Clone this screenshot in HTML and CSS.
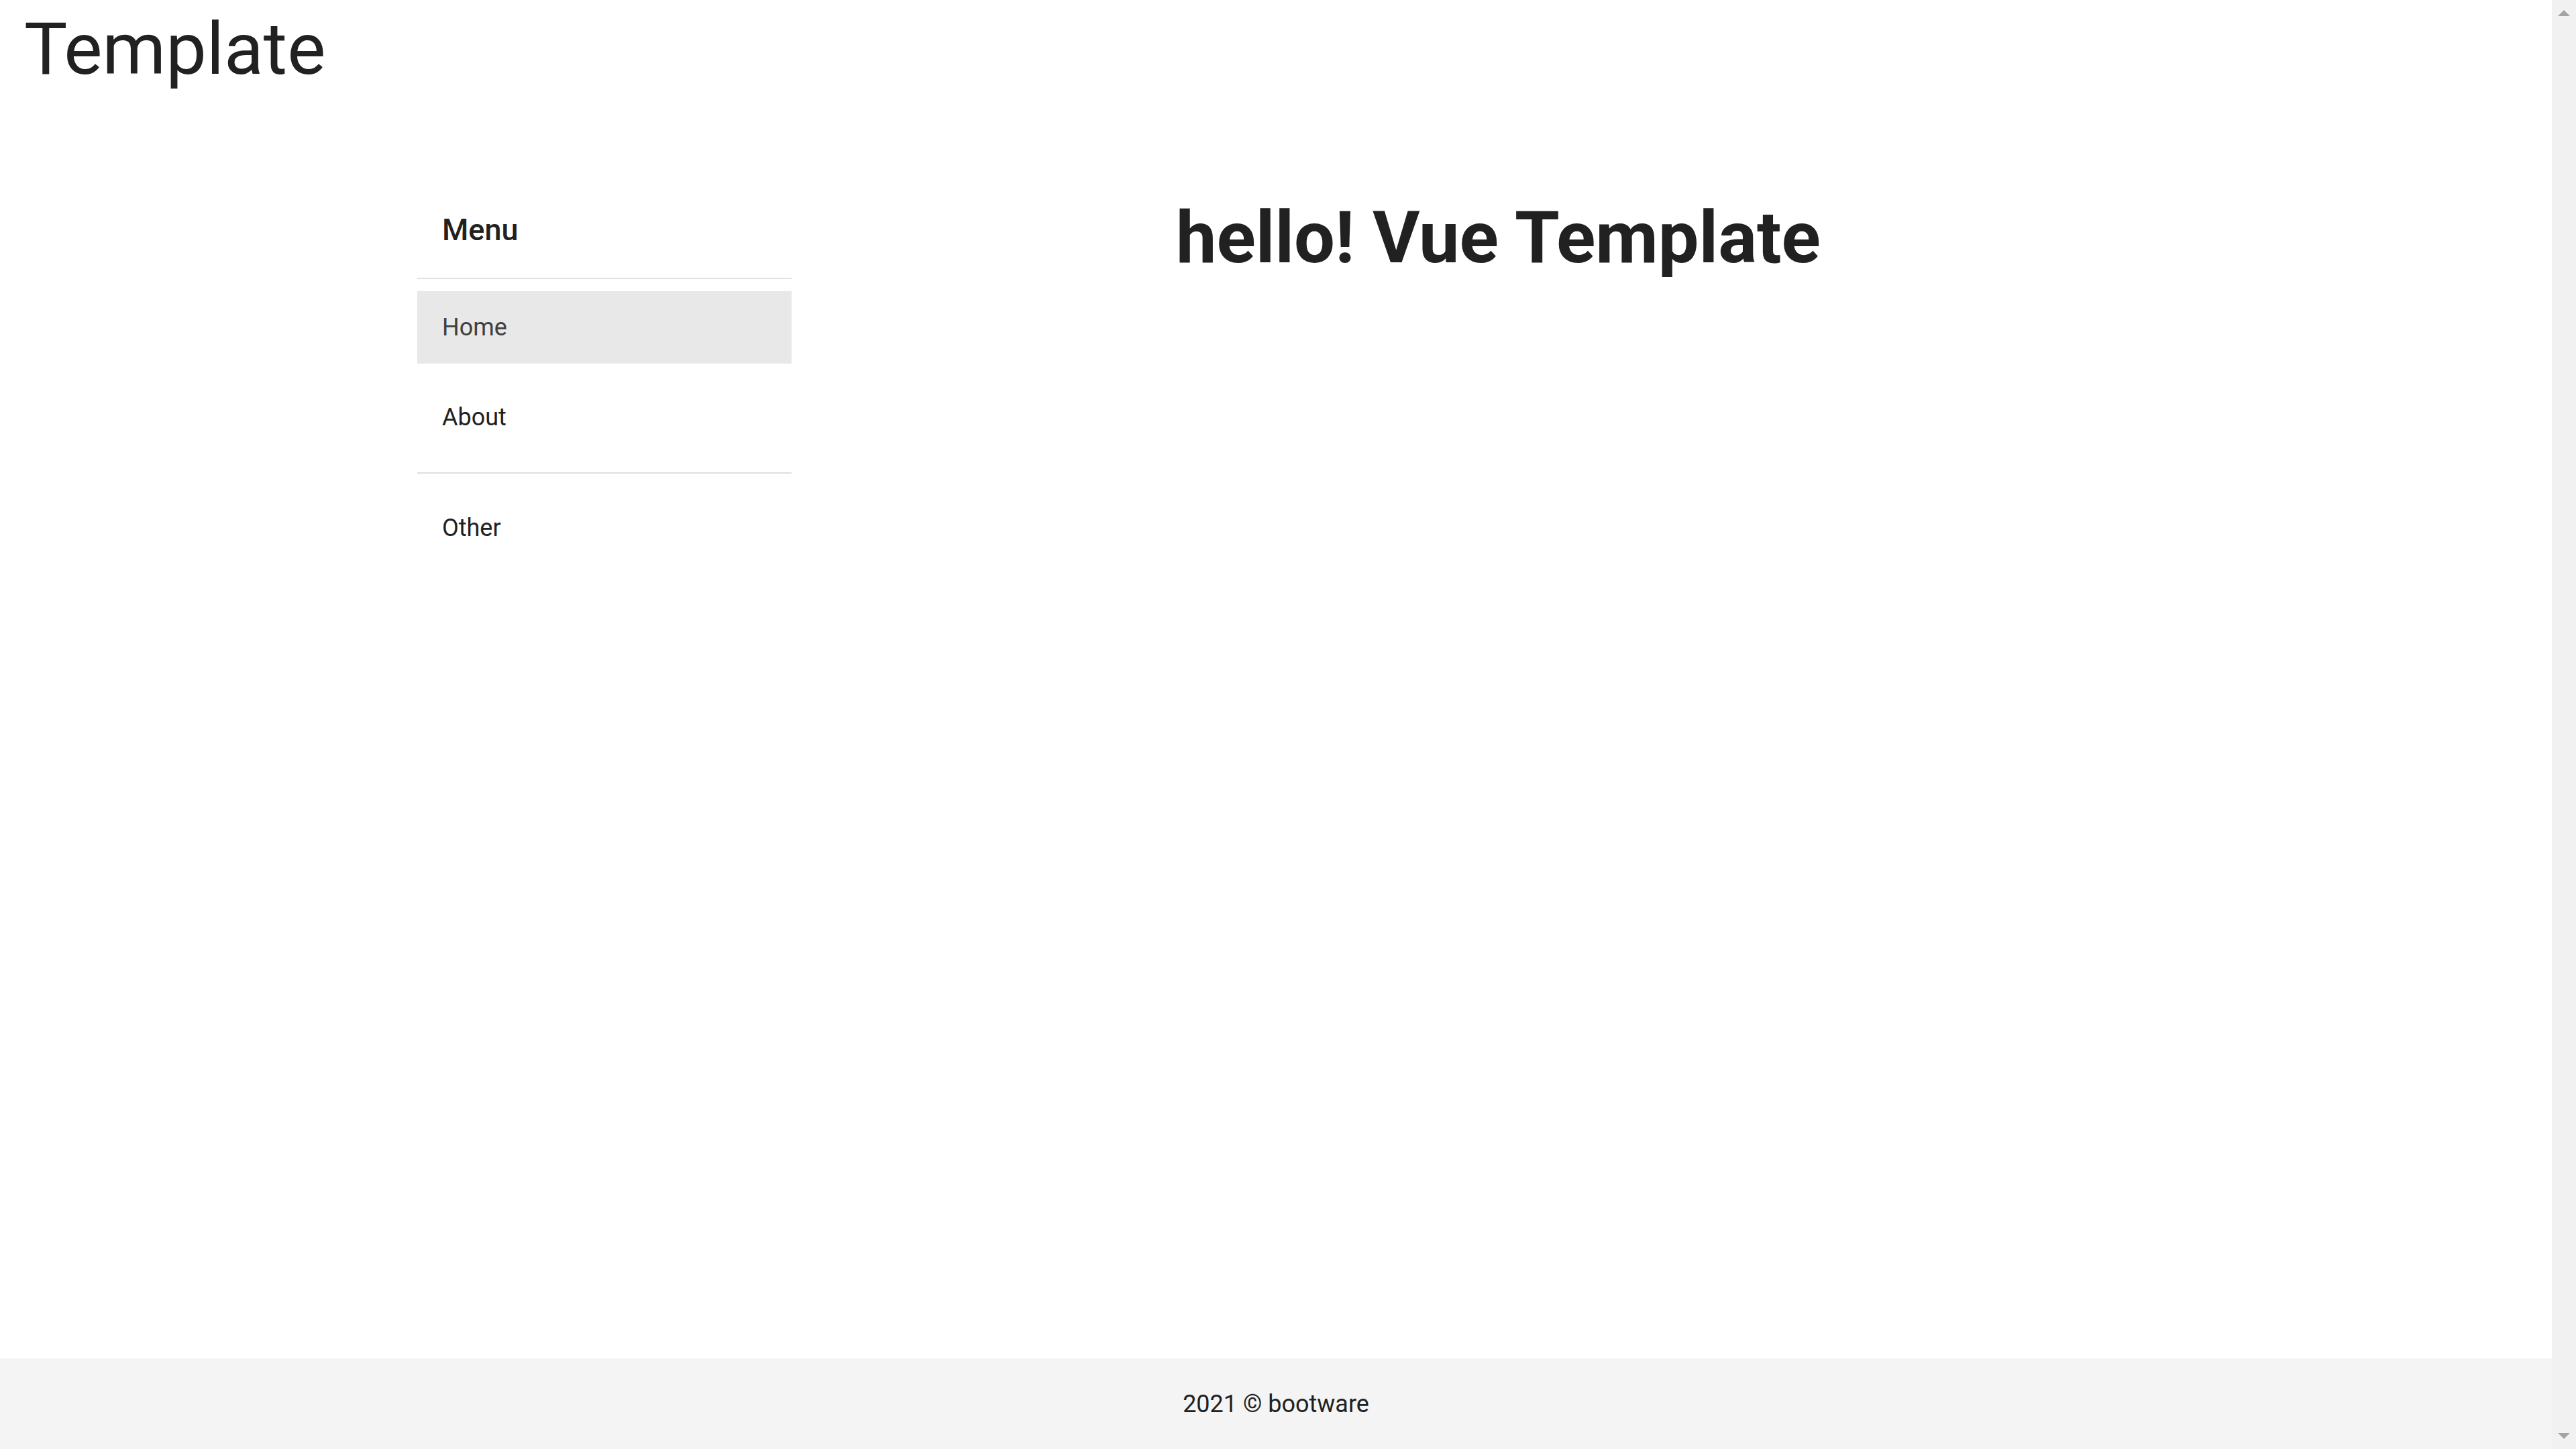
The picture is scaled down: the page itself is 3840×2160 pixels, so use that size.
FILE: index.html
```html
<!DOCTYPE html>
<html lang="en">
<head>
<meta charset="utf-8">
<title>Template</title>
<link rel="stylesheet" href="styles.css">
</head>
<body>
<div class="app">
  <header class="topbar">
    <h1 class="brand">Template</h1>
  </header>
  <div class="content">
    <aside class="sidebar">
      <div class="menu-title">Menu</div>
      <hr class="divider">
      <ul class="menu-list first">
        <li class="menu-item active">Home</li>
        <li class="menu-item">About</li>
      </ul>
      <hr class="divider">
      <ul class="menu-list second">
        <li class="menu-item">Other</li>
      </ul>
    </aside>
    <main class="main">
      <h2 class="hello">hello! Vue Template</h2>
    </main>
  </div>
  <footer class="footer">2021 © bootware</footer>
</div>
<div class="scrollbar">
  <span class="arrow up"></span>
  <span class="arrow down"></span>
</div>
</body>
</html>
```

FILE: styles.css
```css
html, body {
  margin: 0;
  padding: 0;
  height: 100%;
  overflow: hidden;
  background: #ffffff;
}

body {
  font-family: Roboto, "Liberation Sans", sans-serif;
  color: #212121;
}

.app {
  width: calc(100% - 36px);
  height: 100vh;
  display: flex;
  flex-direction: column;
}

.topbar {
  padding: 13px 0 0 36px;
}

.brand {
  margin: 0;
  font-size: 108px;
  font-weight: 400;
  line-height: 120px;
  color: #212121;
}

.content {
  flex: 1;
  display: flex;
  padding-top: 161px;
  padding-left: 622px;
}

.sidebar {
  flex: 0 0 558px;
  display: flex;
  flex-direction: column;
}

.menu-title {
  padding: 17px 0 39px 37px;
  font-size: 45px;
  font-weight: 500;
  line-height: 64px;
  color: #212121;
}

.divider {
  margin: 0;
  border: 0;
  height: 2px;
  background: #e0e0e0;
}

.menu-list {
  list-style: none;
  margin: 0;
  display: flex;
  flex-direction: column;
  gap: 26px;
}

.menu-list.first {
  padding: 18px 0 28px 0;
}

.menu-list.second {
  padding: 27px 0 0 0;
}

.menu-item {
  height: 108px;
  display: flex;
  align-items: center;
  padding-left: 37px;
  font-size: 36px;
  font-weight: 400;
  color: #212121;
}

.menu-item.active {
  background: #e8e8e8;
  color: #404040;
}

.main {
  flex: 1;
  padding-left: 573px;
}

.hello {
  margin: 0;
  font-size: 108px;
  font-weight: 700;
  line-height: 120px;
  color: #212121;
  white-space: nowrap;
}

.footer {
  flex: 0 0 135px;
  background: #f4f4f4;
  display: flex;
  align-items: center;
  justify-content: center;
  font-size: 36px;
  color: #212121;
}

.scrollbar {
  position: fixed;
  top: 0;
  right: 0;
  width: 36px;
  height: 100%;
  background: #f1f1f1;
}

.arrow {
  position: absolute;
  left: 9px;
  width: 0;
  height: 0;
  border-left: 9px solid transparent;
  border-right: 9px solid transparent;
}

.arrow.up {
  top: 15px;
  border-bottom: 9px solid #a3a3a3;
}

.arrow.down {
  bottom: 15px;
  border-top: 9px solid #a3a3a3;
}
```
